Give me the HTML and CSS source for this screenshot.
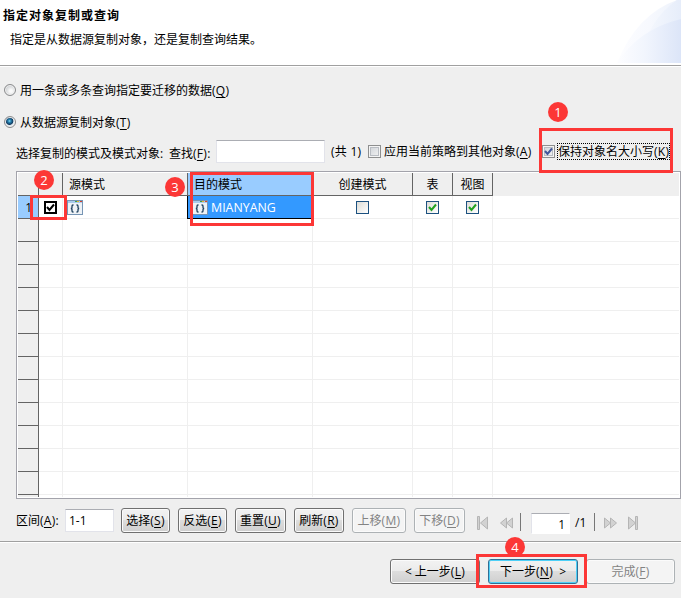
FILE: index.html
```html
<!DOCTYPE html>
<html lang="zh-CN">
<head>
<meta charset="utf-8">
<title>指定对象复制或查询</title>
<link rel="stylesheet" href="styles.css">
</head>
<body>
<svg class="defs" aria-hidden="true">
  <symbol id="schema" viewBox="0 0 16 15">
    <rect x=".5" y=".5" width="15" height="14" fill="#eef2f6" stroke="#7795b4"/>
    <path d="M1 1h14v2H1z" fill="#a9cbec"/>
    <path d="M8 1h2v1H8z" fill="#3a9e50"/><path d="M10 1h2v1h-2z" fill="#e8b32a"/><path d="M13 1h2v1h-2z" fill="#d8432c"/>
    <path d="M6.500 5H6Q5 5 5 6v1.500q0 1-1.200 1Q5 8.500 5 9.500V11q0 1 1 1h.5M9.500 5h.5q1 0 1 1v1.500q0 1 1.200 1-1.200 0-1.200 1V11q0 1-1 1h-.5" fill="none" stroke="#1d405f" stroke-width="1.300"/>
  </symbol>
  <symbol id="tick" viewBox="0 0 9 9">
    <path d="M1 4l2.500 3L8 1.500" fill="none" stroke="currentColor" stroke-width="2"/>
  </symbol>
</svg>
<div class="wizard">
  <header class="head">
    <h1>指定对象复制或查询</h1>
    <p>指定是从数据源复制对象，还是复制查询结果。</p>
    <svg class="swoosh" width="66" height="63" viewBox="0 0 66 63">
      <defs>
        <linearGradient id="g1"><stop offset="0" stop-color="#fdfdff"/><stop offset=".5" stop-color="#f7f9fe"/><stop offset="1" stop-color="#edf2fb"/></linearGradient>
        <linearGradient id="g2"><stop offset="0" stop-color="#f8fafe"/><stop offset="1" stop-color="#e6edfa"/></linearGradient>
        <linearGradient id="g3"><stop offset="0" stop-color="#fdfdff"/><stop offset=".45" stop-color="#f1f5fd"/><stop offset="1" stop-color="#dce5f8"/></linearGradient>
      </defs>
      <path d="M2 63Q22 14 62 0h4v63z" fill="url(#g1)"/>
      <path d="M25 63Q32 20 62 0h4v63z" fill="url(#g2)"/>
      <path d="M2 63Q24 29 66 19v44z" fill="url(#g3)"/>
    </svg>
  </header>

  <main>
    <div class="radio first"><i class="dot"></i><span>用一条或多条查询指定要迁移的数据<b>(<u>Q</u>)</b></span></div>
    <div class="radio second"><i class="dot on"></i><span>从数据源复制对象<b>(<u>T</u>)</b></span></div>

    <div class="filter">
      <span class="pick">选择复制的模式及模式对象:</span>
      <span class="find">查找<b>(<u>F</u>):</b></span>
      <span class="field search"></span>
      <span class="total">(共 1)</span>
      <i class="check"></i>
      <span class="apply">应用当前策略到其他对象<b>(<u>A</u>)</b></span>
      <i class="check keepbox"><svg><use href="#tick"/></svg></i>
      <span class="keep">保持对象名大小写<b>(<u>K</u>)</b></span>
    </div>

    <div class="table">
      <div class="row header"><div></div><div></div><div>源模式</div><div class="picked">目的模式</div><div class="mid">创建模式</div><div class="mid">表</div><div class="mid">视图</div><div></div></div>
      <div class="row data">
        <div class="num">1</div>
        <div class="mid"><i class="box bold"><svg><use href="#tick"/></svg></i></div>
        <div class="src"><svg class="icon"><use href="#schema"/></svg></div>
        <div class="selected"><svg class="icon"><use href="#schema"/></svg><span>MIANYANG</span></div>
        <div class="mid"><i class="box"></i></div>
        <div class="mid"><i class="box"><svg><use href="#tick"/></svg></i></div>
        <div class="mid"><i class="box"><svg><use href="#tick"/></svg></i></div>
        <div></div>
      </div>
      <div class="row"><div></div><div></div><div></div><div></div><div></div><div></div><div></div><div></div></div>
      <div class="row"><div></div><div></div><div></div><div></div><div></div><div></div><div></div><div></div></div>
      <div class="row"><div></div><div></div><div></div><div></div><div></div><div></div><div></div><div></div></div>
      <div class="row"><div></div><div></div><div></div><div></div><div></div><div></div><div></div><div></div></div>
      <div class="row"><div></div><div></div><div></div><div></div><div></div><div></div><div></div><div></div></div>
      <div class="row"><div></div><div></div><div></div><div></div><div></div><div></div><div></div><div></div></div>
      <div class="row"><div></div><div></div><div></div><div></div><div></div><div></div><div></div><div></div></div>
      <div class="row"><div></div><div></div><div></div><div></div><div></div><div></div><div></div><div></div></div>
      <div class="row"><div></div><div></div><div></div><div></div><div></div><div></div><div></div><div></div></div>
      <div class="row"><div></div><div></div><div></div><div></div><div></div><div></div><div></div><div></div></div>
      <div class="row"><div></div><div></div><div></div><div></div><div></div><div></div><div></div><div></div></div>
      <div class="row"><div></div><div></div><div></div><div></div><div></div><div></div><div></div><div></div></div>
      <div class="row stub"><div></div><div></div><div></div><div></div><div></div><div></div><div></div><div></div></div>
    </div>

    <div class="tools">
      <span class="range">区间<b>(<u>A</u>):</b></span>
      <span class="field span">1-1</span>
      <div class="buttons">
        <span class="btn w49">选择<b>(<u>S</u>)</b></span>
        <span class="btn w49">反选<b>(<u>E</u>)</b></span>
        <span class="btn w51">重置<b>(<u>U</u>)</b></span>
        <span class="btn w50">刷新<b>(<u>R</u>)</b></span>
        <span class="btn off w54">上移<b>(<u>M</u>)</b></span>
        <span class="btn off w51">下移<b>(<u>D</u>)</b></span>
      </div>
      <svg class="nav n1" width="12" height="14" viewBox="0 0 12 14"><path d="M.5.5h2v13h-2zM10.500 1v12L3.500 7z"/></svg>
      <svg class="nav n2" width="13" height="14" viewBox="0 0 13 14"><path d="M6.500 2v10L.5 7zM12.500 2v10l-6-5z"/></svg>
      <i class="bar"></i>
      <span class="field page">1</span>
      <span class="pages">/1</span>
      <i class="bar"></i>
      <svg class="nav n3" width="13" height="14" viewBox="0 0 13 14"><path d="M.5 2v10l6-5zM6.500 2v10l6-5z"/></svg>
      <svg class="nav n4" width="12" height="14" viewBox="0 0 12 14"><path d="M1.500 1v12l7-6zM8.500.5h2v13h-2z"/></svg>
    </div>
  </main>

  <footer>
    <span class="btn back">&lt; 上一步<b>(<u>L</u>)</b></span>
    <span class="btn next">下一步<b>(<u>N</u>)</b>&nbsp; &gt;</span>
    <span class="btn off done">完成<b>(<u>F</u>)</b></span>
  </footer>

  <div class="mark m1"></div><div class="mark m2"></div><div class="mark m3"></div><div class="mark m4"></div>
  <span class="badge b1">1</span><span class="badge b2">2</span><span class="badge b3">3</span><span class="badge b4">4</span>
</div>
</body>
</html>
```
FILE: styles.css
```css
* { box-sizing: border-box; }
body {
  margin: 0;
  background: #efefef;
  color: #000;
  font: 12px/16px "Open Sans", "Noto Sans CJK SC", sans-serif;
}
b { font-weight: 400; letter-spacing: .3px; }
u { text-decoration: underline; text-underline-offset: 2px; text-decoration-thickness: 1px; text-decoration-skip-ink: none; }
.defs { display: none; }
.wizard { position: relative; width: 681px; height: 598px; overflow: hidden; white-space: nowrap; }

.head { position: relative; height: 67px; padding: 8px 0 0 3px; background: #fff; border-bottom: 1px solid #fff; box-shadow: inset 0 -1px #a0a0a0; }
.head h1 { margin: 0; font-size: 12px; line-height: 16px; letter-spacing: 1px; }
.head p { margin: 8px 0 0 7px; }
.swoosh { position: absolute; right: 0; top: 0; }

.radio { display: flex; align-items: center; height: 18px; padding-left: 4px; gap: 4px; }
.radio span { padding-top: 1px; }
.first { margin-top: 14px; }
.second { margin-top: 14px; }
.dot { width: 12px; height: 12px; border: 1px solid #8b8c8e; border-radius: 50%; background: radial-gradient(circle at 60% 60%, #fafafa 15%, #c6c9cc 75%); box-shadow: inset 0 0 0 1px #f1f1f1; }
.dot.on { background: radial-gradient(circle at 45% 40%, #8fdcf5 0, #2482b1 18%, #12385d 43%, #d7e3ea 52%, #eee 70%); }

.filter { display: flex; align-items: center; height: 24px; margin-top: 8px; padding-left: 16px; }
.pick { width: 153px; padding-top: 5px; }
.find { width: 47px; padding-top: 5px; }
.field { background: #fff; border: 1px solid #e2e3ea; border-top-color: #abadb3; }
.search { width: 109px; height: 23px; }
.total { width: 37px; margin-left: 6px; padding-top: 2px; letter-spacing: .25px; }
.check { flex: none; width: 13px; height: 13px; border: 1px solid #8e8f8f; background: linear-gradient(135deg, #cdd1d6, #f5f5f5); box-shadow: inset 0 0 0 1px #f4f4f4, inset 0 0 0 2px #b9bdc3; color: #41579b; }
.check svg { display: block; width: 9px; height: 9px; margin: 1px; }
.apply { width: 158px; margin-left: 3px; padding-top: 2px; }
.keep { margin-left: 2px; height: 17px; width: 113px; outline: 1px dotted #000; outline-offset: -1px; padding-left: 1px; line-height: 17px; }

.table { height: 328px; margin: 8px 0 0 16px; padding: 1px; background: #fff; border: 1px solid #a3a3ab; }
.row { display: grid; grid-template-columns: 21px 24px 125px 125px 100px 40px 40px 1fr; height: 23px; }
.row > div { display: flex; align-items: center; border-right: 1px solid #efefef; border-bottom: 1px solid #efefef; }
.row > div:first-child { background: #efefef; border-color: #646464; }
.row > div:last-child { border-right: 0; }
.row .mid { justify-content: center; }
.header > div { background: #efefef; }
.header > div:not(:last-child) { border-color: #646464; padding: 2px 0 0 6px; }
.header > .mid { padding-left: 0 !important; }
.header > .picked { background: #99ccff; }
.data > .num { background: #99ccff !important; justify-content: flex-end; padding: 2px 6px 0 0; }
.row .selected { background: #3399ff; color: #fff; border: 1px solid #000; border-top: 0; margin-left: -1px; font-size: 12.4px; }
.selected .icon { margin-left: 4px; }
.selected span { margin-left: 3px; padding-top: 2px; }
.src .icon { margin-left: 4px; }
.icon { width: 16px; height: 15px; margin-top: 1px; }
.box { width: 13px; height: 13px; border: 1px solid #1c5180; background: linear-gradient(135deg, #dcdcd7, #fff); color: #21a121; }
.box svg { display: block; width: 9px; height: 9px; margin: 1px; }
.box.bold { border: 2px solid #000; background: #fff; color: #000; }
.box.bold svg { margin: 0; }
.stub { height: 2px; }
.stub > div { border-bottom: 0 !important; }

.tools { display: flex; align-items: center; height: 43px; padding: 1px 0 0 16px; border-bottom: 1px solid #a0a0a0; box-shadow: 0 1px #fff; }
.range { width: 49px; padding-top: 1px; }
.span { width: 49px; height: 23px; padding: 3px 0 0 3px; }
.buttons { display: flex; gap: 8px; margin-left: 7px; }
.btn { display: flex; flex: none; align-items: center; justify-content: center; height: 25px; padding-top: 1px; border: 1px solid #707070; border-radius: 3px; background: linear-gradient(#f2f2f2, #ebebeb 49%, #dddddd 50%, #cfcfcf); box-shadow: inset 0 0 0 1px #fbfbfb; }
.btn.off { color: #838383; border-color: #adb2b5; background: #f4f4f4; }
.w49 { width: 49px; } .w50 { width: 50px; } .w51 { width: 51px; } .w54 { width: 54px; }
.nav { flex: none; margin-top: 4px; fill: #d2d2d2; stroke: #b5b5b5; }
.n1 { margin-left: 12px; } .n2 { margin-left: 11px; margin-right: 7px; }
.bar { width: 1px; height: 18px; margin-top: 3px; background: #777; }
.page { width: 39px; height: 21px; margin: 5px 0 0 10px; padding: 3px 4px 0 0; text-align: right; border-color: #abadb3 #fff #fff #e2e3ea; }
.pages { width: 19px; margin: 5px 0 0 5px; }
.n3 { margin-left: 9px; } .n4 { margin-left: 10px; }

footer { display: flex; height: 55px; padding: 17px 0 0 390px; }
.back { width: 90px; }
.next { width: 90px; margin-left: 8px; border-color: #316e94; box-shadow: inset 0 0 0 1px #4ed0f7; }
.done { width: 89px; margin-left: 8px; }

.mark { position: absolute; border: 3px solid #fc3736; }
.m1 { left: 539px; top: 128px; width: 134px; height: 45px; }
.m2 { left: 30px; top: 195px; width: 37px; height: 25px; }
.m3 { left: 190px; top: 172px; width: 124px; height: 54px; }
.m4 { left: 476px; top: 554px; width: 111px; height: 34px; }
.badge { position: absolute; width: 20px; height: 20px; border-radius: 50%; background: #fc3736; color: #fff; text-align: center; font-size: 13px; line-height: 20px; }
.b1 { left: 548px; top: 102px; }
.b2 { left: 34px; top: 170px; }
.b3 { left: 165px; top: 177px; }
.b4 { left: 505px; top: 537px; }
```
